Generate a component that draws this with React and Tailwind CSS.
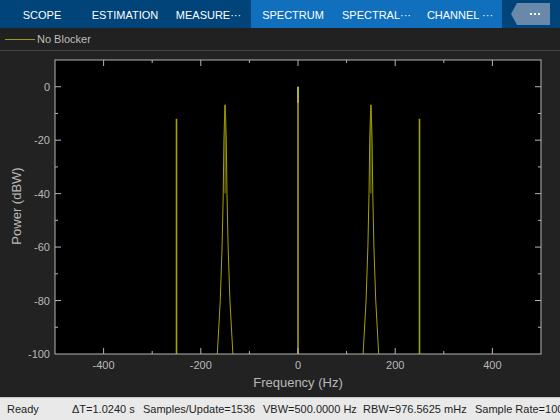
import React from 'react';

const FONT = { fontFamily: '"Liberation Sans", Arial, sans-serif' };

// plot geometry (page px), plot svg starts at page y=51
const fx = (hz) => 55 + (hz + 500) * 0.486;
const fy = (db) => 60 - 51 + (10 - db) * 2.6727;

const skirt = [
  [-100, 16],
  [-80, 9.95],
  [-60, 6.2],
  [-40, 3.85],
  [-20, 2.4],
  [-6.8, 0.4],
];

function skirtPoints(center) {
  const left = skirt.map(([db, off]) => `${fx(center - off)},${fy(db)}`);
  const right = [...skirt].reverse().map(([db, off]) => `${fx(center + off)},${fy(db)}`);
  return [...left, ...right].join(' ');
}

function Tabs() {
  const tabs = [
    { label: 'SCOPE', w: 'w-[84px]' },
    { label: 'ESTIMATION', w: 'w-[82px]' },
    { label: 'MEASURE···', w: 'w-[85px]' },
  ];
  const ctx = [
    { label: 'SPECTRUM', w: 'w-[84px]' },
    { label: 'SPECTRAL···', w: 'w-[83px]' },
    { label: 'CHANNEL ···', w: 'w-[84px]' },
  ];
  return (
    <div className="flex h-[28px] bg-[#00447a] text-white text-[11px]">
      {tabs.map((t) => (
        <div key={t.label} className={`${t.w} shrink-0 flex items-center justify-center pt-[2px]`}>
          {t.label}
        </div>
      ))}
      <div className="flex shrink-0 bg-[#1070be]">
        {ctx.map((t) => (
          <div key={t.label} className={`${t.w} shrink-0 flex items-center justify-center pt-[2px]`}>
            {t.label}
          </div>
        ))}
      </div>
      <div className="flex-1 flex items-center pl-[9px]">
        <div className="w-[39px] h-[22px] bg-[#6889a9] flex items-center justify-center pl-[8px] gap-[2px] [clip-path:polygon(6px_0,100%_0,100%_100%,6px_100%,0_50%)]">
          <span className="w-[2px] h-[2px] bg-white" />
          <span className="w-[2px] h-[2px] bg-white" />
          <span className="w-[2px] h-[2px] bg-white" />
        </div>
      </div>
    </div>
  );
}

function Plot() {
  const xTicks = [];
  for (let hz = -400; hz <= 400; hz += 100) xTicks.push(hz);
  const yTicks = [];
  for (let db = -90; db <= 0; db += 10) yTicks.push(db);
  const axis = '#b4b4b4';
  const label = '#b9b9b9';
  const spike = '#a4a400';
  const x0 = 55, x1 = 541, y0 = fy(10), y1 = fy(-100);

  return (
    <svg width="560" height="346" className="block shrink-0">
      <rect x="0" y="0" width="560" height="346" fill="#222222" />
      <rect x={x0} y={y0} width={x1 - x0} height={y1 - y0} fill="#000" />

      {/* spectrum */}
      <line x1={fx(-250)} y1={fy(-12)} x2={fx(-250)} y2={y1} stroke={spike} strokeWidth="1.6" />
      <line x1={fx(250)} y1={fy(-12)} x2={fx(250)} y2={y1} stroke={spike} strokeWidth="1.6" />
      <polyline points={skirtPoints(-150)} fill="none" stroke={spike} strokeWidth="1" />
      <polyline points={skirtPoints(150)} fill="none" stroke={spike} strokeWidth="1" />
      <line x1={fx(-150)} y1={fy(-6.8)} x2={fx(-150)} y2={fy(-40)} stroke="#8a8a00" strokeWidth="1" />
      <line x1={fx(150)} y1={fy(-6.8)} x2={fx(150)} y2={fy(-40)} stroke="#8a8a00" strokeWidth="1" />
      <line x1={fx(0)} y1={fy(0)} x2={fx(0)} y2={y1} stroke={spike} strokeWidth="1.6" />
      <line x1={fx(0)} y1={fy(0)} x2={fx(0)} y2={fy(-6)} stroke="#e0e060" strokeWidth="1" />

      {/* axes box */}
      <rect x={x0} y={y0} width={x1 - x0} height={y1 - y0} fill="none" stroke={axis} strokeWidth="1" />

      {xTicks.map((hz) => {
        const len = hz % 200 === 0 ? 6 : 3;
        const x = fx(hz);
        return (
          <g key={hz}>
            <line x1={x} y1={y0} x2={x} y2={y0 + len} stroke={axis} />
            <line x1={x} y1={y1} x2={x} y2={y1 - len} stroke={axis} />
            {hz % 200 === 0 && (
              <text x={x} y={y1 + 15} fill={label} fontSize="11" textAnchor="middle" style={FONT}>
                {hz}
              </text>
            )}
          </g>
        );
      })}
      {yTicks.map((db) => {
        const len = db % 20 === 0 ? 6 : 3;
        const y = fy(db);
        return (
          <g key={db}>
            <line x1={x0} y1={y} x2={x0 + len} y2={y} stroke={axis} />
            <line x1={x1} y1={y} x2={x1 - len} y2={y} stroke={axis} />
          </g>
        );
      })}
      {[0, -20, -40, -60, -80, -100].map((db) => (
        <text key={db} x="50" y={fy(db) + 4} fill={label} fontSize="11" textAnchor="end" style={FONT}>
          {db}
        </text>
      ))}

      <text x="298" y="336" fill={label} fontSize="13" textAnchor="middle" style={FONT}>
        Frequency (Hz)
      </text>
      <text
        x="0"
        y="0"
        fill={label}
        fontSize="13"
        textAnchor="middle"
        transform="translate(21 155) rotate(-90)"
        style={FONT}
      >
        Power (dBW)
      </text>
    </svg>
  );
}

export default function App() {
  return (
    <div className="w-[560px] h-[420px] overflow-hidden bg-[#222222] flex flex-col" style={FONT}>
      <Tabs />
      {/* legend */}
      <div className="h-[23px] shrink-0 flex items-center pl-[5px] border-b border-[#454545] bg-[#212121]">
        <span className="w-[30px] h-[1px] bg-[#9a9a20] mr-[2px] mt-[1px]" />
        <span className="text-[11px] text-[#bdbdbd]">No Blocker</span>
      </div>
      <Plot />
      {/* status bar */}
      <div className="flex-1 flex items-center overflow-hidden bg-[#e9e9e9] border-t border-[#c8c8c8] text-[11px] text-[#1e1e1e] whitespace-nowrap">
        <span className="shrink-0 pl-[7px] w-[72px]">Ready</span>
        <span className="shrink-0 w-[71px]">ΔT=1.0240 s</span>
        <span className="shrink-0 w-[120px]">Samples/Update=1536</span>
        <span className="shrink-0 w-[100px]">VBW=500.0000 Hz</span>
        <span className="shrink-0 w-[112px]">RBW=976.5625 mHz</span>
        <span className="shrink-0">Sample Rate=1000 Hz</span>
      </div>
    </div>
  );
}
